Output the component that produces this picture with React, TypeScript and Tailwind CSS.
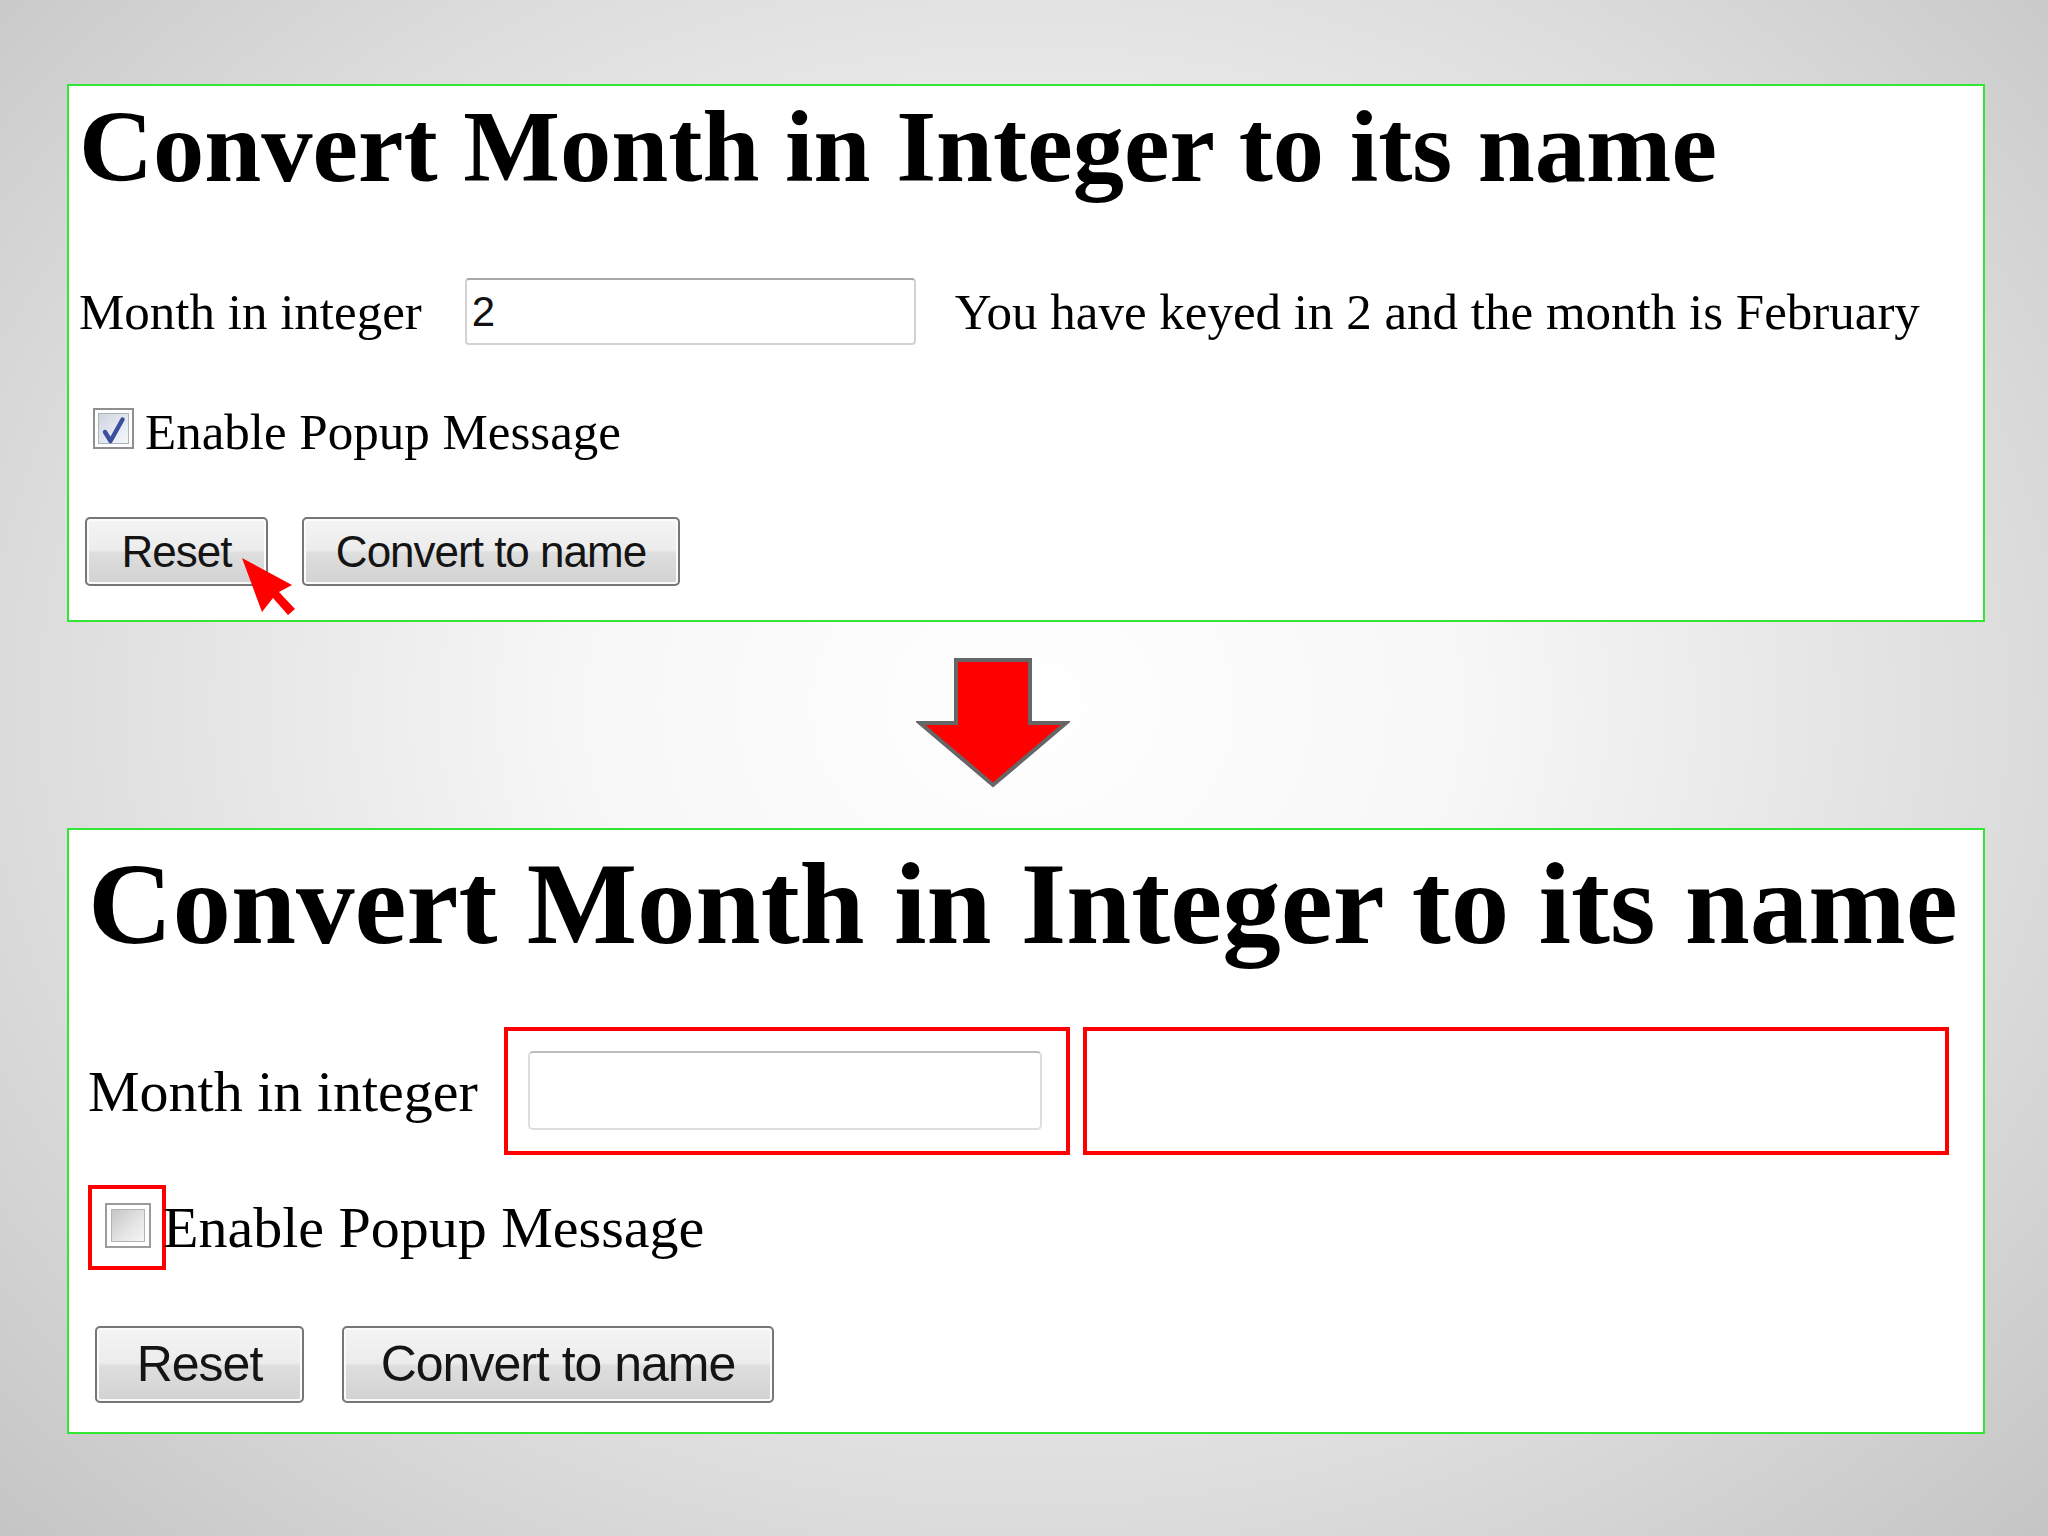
import React from "react";

function CheckedBox() {
  return (
    <div className="w-[41px] h-[41px] border-2 border-[#8f8f8f] bg-white p-[3px] shrink-0">
      <div className="relative w-full h-full border border-[#aeb3bd] bg-[image:linear-gradient(135deg,#cfd5e0,#e9edf4_70%,#f5f7fa)]">
        <svg className="absolute inset-0" width="31" height="31" viewBox="0 0 31 31">
          <path d="M6 18 L11.5 27 L23.5 5.5" stroke="#3b4f9e" strokeWidth="4.4" fill="none" strokeLinecap="round" strokeLinejoin="round" />
        </svg>
      </div>
    </div>
  );
}

function EmptyBox() {
  return (
    <div className="w-[46px] h-[45px] border-2 border-[#9b9b9b] bg-white p-[4px] shrink-0">
      <div className="w-full h-full border border-[#b3b3b3] bg-[image:linear-gradient(135deg,#c6c6c6,#e3e3e3_55%,#f6f6f6)]" />
    </div>
  );
}

function Button({ label, w, h, size }: { label: string; w: string; h: string; size: string }) {
  return (
    <div
      className={`${w} ${h} ${size} shrink-0 flex items-center justify-center rounded-[5px] border-2 border-[#767676] bg-[image:linear-gradient(#f4f4f4,#ececec_48%,#dedede_52%,#d2d2d2)] shadow-[inset_0_0_0_2px_#fbfbfb] font-['Liberation_Sans',Arial,sans-serif] text-[#141414] tracking-[-1px] whitespace-nowrap`}
    >
      {label}
    </div>
  );
}

export default function App() {
  return (
    <div className="w-[2048px] h-[1536px] overflow-hidden bg-[image:radial-gradient(ellipse_72%_78%_at_50%_46%,#ffffff_0%,#f7f7f7_30%,#dcdcdc_68%,#c3c3c3_100%)] pt-[84px] pl-[67px] font-['Liberation_Serif','Times_New_Roman',serif] text-black">
      {/* Top panel */}
      <div className="w-[1918px] h-[538px] border-2 border-[#33e633] bg-white pl-[10px] pt-[10px]">
        <h1 className="font-bold text-[102.5px] leading-[102px] whitespace-nowrap">
          Convert Month in Integer to its name
        </h1>
        <div className="mt-[80px] flex items-center text-[51px] leading-[58px] whitespace-nowrap">
          <span>Month in integer</span>
          <div className="ml-[43px] w-[451px] h-[67px] shrink-0 flex items-center pl-[5px] rounded-[4px] border-2 border-[#d2d2d2] border-t-[#a9a9a9] bg-white font-['Liberation_Sans',Arial,sans-serif] text-[42px] text-[#111]">
            2
          </div>
          <span className="ml-[39px]">You have keyed in 2 and the month is February</span>
        </div>
        <div className="mt-[58px] flex items-start text-[51px] leading-[58px] whitespace-nowrap">
          <div className="ml-[14px] mt-[5px]">
            <CheckedBox />
          </div>
          <span className="ml-[11px]">Enable Popup Message</span>
        </div>
        <div className="relative mt-[56px] ml-[6px] flex gap-[34px]">
          <Button label="Reset" w="w-[183px]" h="h-[69px]" size="text-[44px]" />
          <Button label="Convert to name" w="w-[378px]" h="h-[69px]" size="text-[44px]" />
          <svg className="absolute left-[157px] top-[41px]" width="56" height="60" viewBox="0 0 56 60">
            <polygon points="0,0 50,27 37,34 53,51 46,57 31,40 20,54" fill="#ff0000" />
          </svg>
        </div>
      </div>

      {/* Down arrow */}
      <svg className="mt-[34px] ml-[849px] block" width="154" height="134" viewBox="0 0 154 134">
        <polygon
          points="40,4 114,4 114,67 150,67 77,129 4,67 40,67"
          fill="#ff0000"
          stroke="#666666"
          strokeWidth="4"
          strokeLinejoin="miter"
        />
      </svg>

      {/* Bottom panel */}
      <div className="mt-[38px] w-[1918px] h-[606px] border-2 border-[#33e633] bg-white pl-[19px] pt-[16px]">
        <h1 className="font-bold text-[117px] leading-[116px] whitespace-nowrap">
          Convert Month in Integer to its name
        </h1>
        <div className="mt-[65px] flex items-center text-[58px] leading-[67px] whitespace-nowrap">
          <span>Month in integer</span>
          <div className="ml-[26px] w-[566px] h-[128px] shrink-0 border-4 border-[#ff0000] pl-[20px] pt-[20px]">
            <div className="w-[514px] h-[79px] rounded-[5px] border-2 border-[#dedede] border-t-[#bdbdbd] bg-white" />
          </div>
          <div className="ml-[13px] w-[866px] h-[128px] shrink-0 border-4 border-[#ff0000]" />
        </div>
        <div className="mt-[30px] flex items-center text-[58px] leading-[67px] whitespace-nowrap">
          <div className="w-[78px] h-[85px] shrink-0 border-4 border-[#ff0000] pl-[13px] pt-[14px]">
            <EmptyBox />
          </div>
          <span className="ml-[-3px]">Enable Popup Message</span>
        </div>
        <div className="mt-[56px] ml-[7px] flex gap-[38px]">
          <Button label="Reset" w="w-[209px]" h="h-[77px]" size="text-[50px]" />
          <Button label="Convert to name" w="w-[432px]" h="h-[77px]" size="text-[50px]" />
        </div>
      </div>
    </div>
  );
}
